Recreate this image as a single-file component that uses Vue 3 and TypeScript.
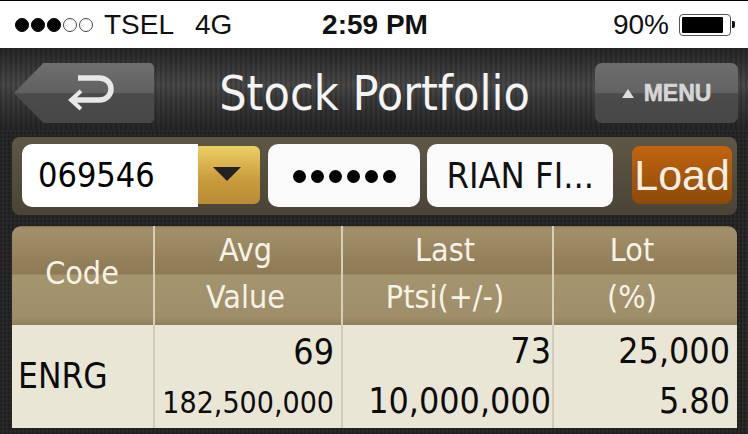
<script setup lang="ts">
interface Cell {
  top: string
  bottom: string
}

const headers: Cell[] = [
  { top: 'Avg', bottom: 'Value' },
  { top: 'Last', bottom: 'Ptsi(+/-)' },
  { top: 'Lot', bottom: '(%)' },
]

const row = [
  { top: '69', bottom: '182,500,000', small: true },
  { top: '73', bottom: '10,000,000', small: false },
  { top: '25,000', bottom: '5.80', small: false },
]
</script>

<template>
  <div class="screen">
    <div class="status">
      <div class="carrier">
        <span class="signal">
          <i v-for="n in 3" :key="n" class="dot on" />
          <i v-for="n in 2" :key="n" class="dot" />
        </span>
        <span class="tsel">TSEL</span>
        <span class="net">4G</span>
      </div>
      <div class="time">2:59 PM</div>
      <div class="power">
        <span>90%</span>
        <span class="battery"><span class="level" /></span>
        <span class="nub" />
      </div>
    </div>

    <div class="nav">
      <button class="back">
        <svg width="48" height="40" viewBox="0 0 48 40">
          <path d="M12 5 H33 C49 5 49 27 33 27 H8" fill="none" stroke="#e8e8e8" stroke-width="5.5" />
          <path d="M15 18 L5 27 L15 36" fill="none" stroke="#e8e8e8" stroke-width="4" />
        </svg>
      </button>
      <div class="title">Stock Portfolio</div>
      <button class="menu"><span class="tri" />MENU</button>
    </div>

    <div class="body">
      <div class="form">
        <div class="account">
          <span class="field-text">069546</span>
          <span class="drop"><span class="drop-arrow" /></span>
        </div>
        <div class="field pin"><i v-for="n in 6" :key="n" class="pin-dot" /></div>
        <div class="field name">RIAN FI...</div>
        <button class="load">Load</button>
      </div>

      <div class="table">
        <div class="head code-head"><span>Code</span></div>
        <div v-for="h in headers" :key="h.top" class="head">
          <span>{{ h.top }}</span>
          <span>{{ h.bottom }}</span>
        </div>
        <div class="cell code">ENRG</div>
        <div v-for="c in row" :key="c.top" class="cell nums">
          <span>{{ c.top }}</span>
          <span :class="{ small: c.small }">{{ c.bottom }}</span>
        </div>
      </div>
    </div>
  </div>
</template>

<style>
html,
body {
  margin: 0;
  background: #222;
}
</style>

<style scoped>
.screen {
  width: 748px;
  height: 434px;
  overflow: hidden;
  font-family: "DejaVu Sans", sans-serif;
  font-stretch: condensed;
  background-color: #2a2a2a;
  background-image:
    repeating-linear-gradient(90deg, rgba(0, 0, 0, 0.16) 0 2px, transparent 2px 4px),
    repeating-linear-gradient(0deg, rgba(0, 0, 0, 0.12) 0 2px, transparent 2px 4px);
}

.status {
  height: 47px;
  border-top: 1px solid #000;
  background: #fff;
  display: grid;
  grid-template-columns: 1fr auto 1fr;
  align-items: center;
  padding: 0 13px 0 15px;
  font-family: "Liberation Sans", sans-serif;
  font-size: 28px;
  color: #111;
}

.carrier {
  display: flex;
  align-items: center;
}

.signal {
  display: flex;
  gap: 2px;
  margin-right: 11px;
}

.dot {
  width: 14px;
  height: 14px;
  box-sizing: border-box;
  border: 1px solid #444;
  border-radius: 50%;
}

.dot.on {
  background: #000;
  border-color: #000;
}

.net {
  margin-left: 21px;
}

.time {
  font-weight: 700;
}

.power {
  display: flex;
  align-items: center;
  justify-content: flex-end;
}

.battery {
  width: 52px;
  height: 22px;
  box-sizing: border-box;
  margin-left: 10px;
  padding: 2px;
  border: 1px solid #555;
  border-radius: 4px;
  display: flex;
}

.level {
  width: 41px;
  background: #000;
  border-radius: 1px;
}

.nub {
  width: 3px;
  height: 7px;
  margin-left: 1px;
  background: #111;
  border-radius: 0 2px 2px 0;
}

.nav {
  height: 82px;
  display: flex;
  align-items: center;
  padding: 8px 10px 0 14px;
  box-sizing: border-box;
  background-color: #3d3d3d;
  background-image:
    repeating-linear-gradient(90deg, rgba(0, 0, 0, 0.16) 0 2px, transparent 2px 5px),
    linear-gradient(#262626, #484848 45%, #3c3c3c 60%, #252525);
}

.back,
.menu {
  height: 60px;
  border: 0;
  padding: 0;
  display: flex;
  align-items: center;
  justify-content: center;
  color: #e4e4e4;
}

.back {
  width: 140px;
  background: linear-gradient(#6f6f6f, #606060 50%, #4b4b4b 51%, #474747);
  clip-path: polygon(21% 0, 98% 0, 100% 6%, 100% 94%, 98% 100%, 21% 100%, 0 50%);
  padding-left: 12px;
  box-sizing: border-box;
}

.title {
  width: 441px;
  text-align: center;
  font-size: 48px;
  color: #f4f4f4;
  line-height: 56px;
}

.menu {
  width: 143px;
  border-radius: 7px;
  background: linear-gradient(#6d6d6d, #626262 50%, #4c4c4c 51%, #474747);
  font-family: "Liberation Sans", sans-serif;
  font-size: 23px;
  font-weight: 700;
  color: #d6d6d6;
  -webkit-text-stroke: 0.6px #d6d6d6;
}

.tri {
  width: 0;
  height: 0;
  margin-right: 10px;
  border-left: 6px solid transparent;
  border-right: 6px solid transparent;
  border-bottom: 9px solid #ddd;
}

.body {
  padding: 7px 11px 0 12px;
}

.form {
  height: 78px;
  box-sizing: border-box;
  border-radius: 8px;
  background: linear-gradient(#5f5746, #4a4436);
  display: flex;
  align-items: center;
  padding: 0 5px 2px 10px;
}

.account {
  width: 238px;
  height: 63px;
  display: flex;
  margin-right: 8px;
  color: #000;
}

.field-text {
  flex: 1;
  background: #fff;
  border-radius: 10px 0 0 10px;
  padding-left: 16px;
  font-size: 34px;
  line-height: 62px;
}

.drop {
  width: 62px;
  height: 58px;
  margin-top: 2px;
  border-radius: 0 6px 6px 0;
  background: linear-gradient(#eccf64, #c99a3c 60%, #b98c36);
  display: flex;
  align-items: center;
  justify-content: center;
}

.drop-arrow {
  width: 0;
  height: 0;
  margin: 0 4px 2px 0;
  border-left: 14px solid transparent;
  border-right: 14px solid transparent;
  border-top: 14px solid #222;
}

.field {
  height: 63px;
  box-sizing: border-box;
  background: #fafafa;
  border-radius: 10px;
  color: #111;
  display: flex;
  align-items: center;
  justify-content: center;
}

.pin {
  width: 153px;
  gap: 5px;
  margin-right: 7px;
  padding-top: 2px;
}

.pin-dot {
  width: 13px;
  height: 13px;
  border-radius: 50%;
  background: #000;
}

.name {
  width: 186px;
  margin-right: 19px;
  font-size: 36px;
}

.load {
  width: 100px;
  height: 58px;
  border: 0;
  padding: 0;
  border-radius: 8px;
  background: linear-gradient(#c26410, #8c4a08);
  color: #f6efe6;
  font-family: "Liberation Sans", sans-serif;
  font-size: 43px;
}

.table {
  height: 202px;
  margin-top: 11px;
  display: grid;
  grid-template-columns: 141px 188px 211px 185px;
  grid-template-rows: 99px 103px;
}

.head {
  display: flex;
  flex-direction: column;
  justify-content: space-around;
  align-items: center;
  padding: 0 5px 5px 0;
  border-left: 2px solid #d6d0bb;
  font-size: 32px;
  color: #f6f2e6;
  background: linear-gradient(#84704a, #a2916c 2%, #8e7a55 48%, #a5956f 50%, #9f8e69 92%, #8f7f5c);
}

.code-head {
  border-left: 0;
  border-radius: 9px 0 0 0;
  justify-content: center;
  padding-right: 1px;
}

.head:nth-child(4) {
  border-radius: 0 9px 0 0;
  padding-right: 27px;
}

.cell {
  background: #e9e6d6;
  border-left: 2px solid #cfccbc;
  color: #0c0c0c;
  font-size: 35.5px;
}

.code {
  border-left: 0;
  padding: 31px 0 0 6px;
  font-size: 35px;
}

.nums {
  display: flex;
  flex-direction: column;
  align-items: flex-end;
  justify-content: space-around;
  padding: 0 7px 2px 0;
}

.nums:nth-child(7) {
  padding-right: 1px;
}

.small {
  font-size: 30px;
}
</style>
